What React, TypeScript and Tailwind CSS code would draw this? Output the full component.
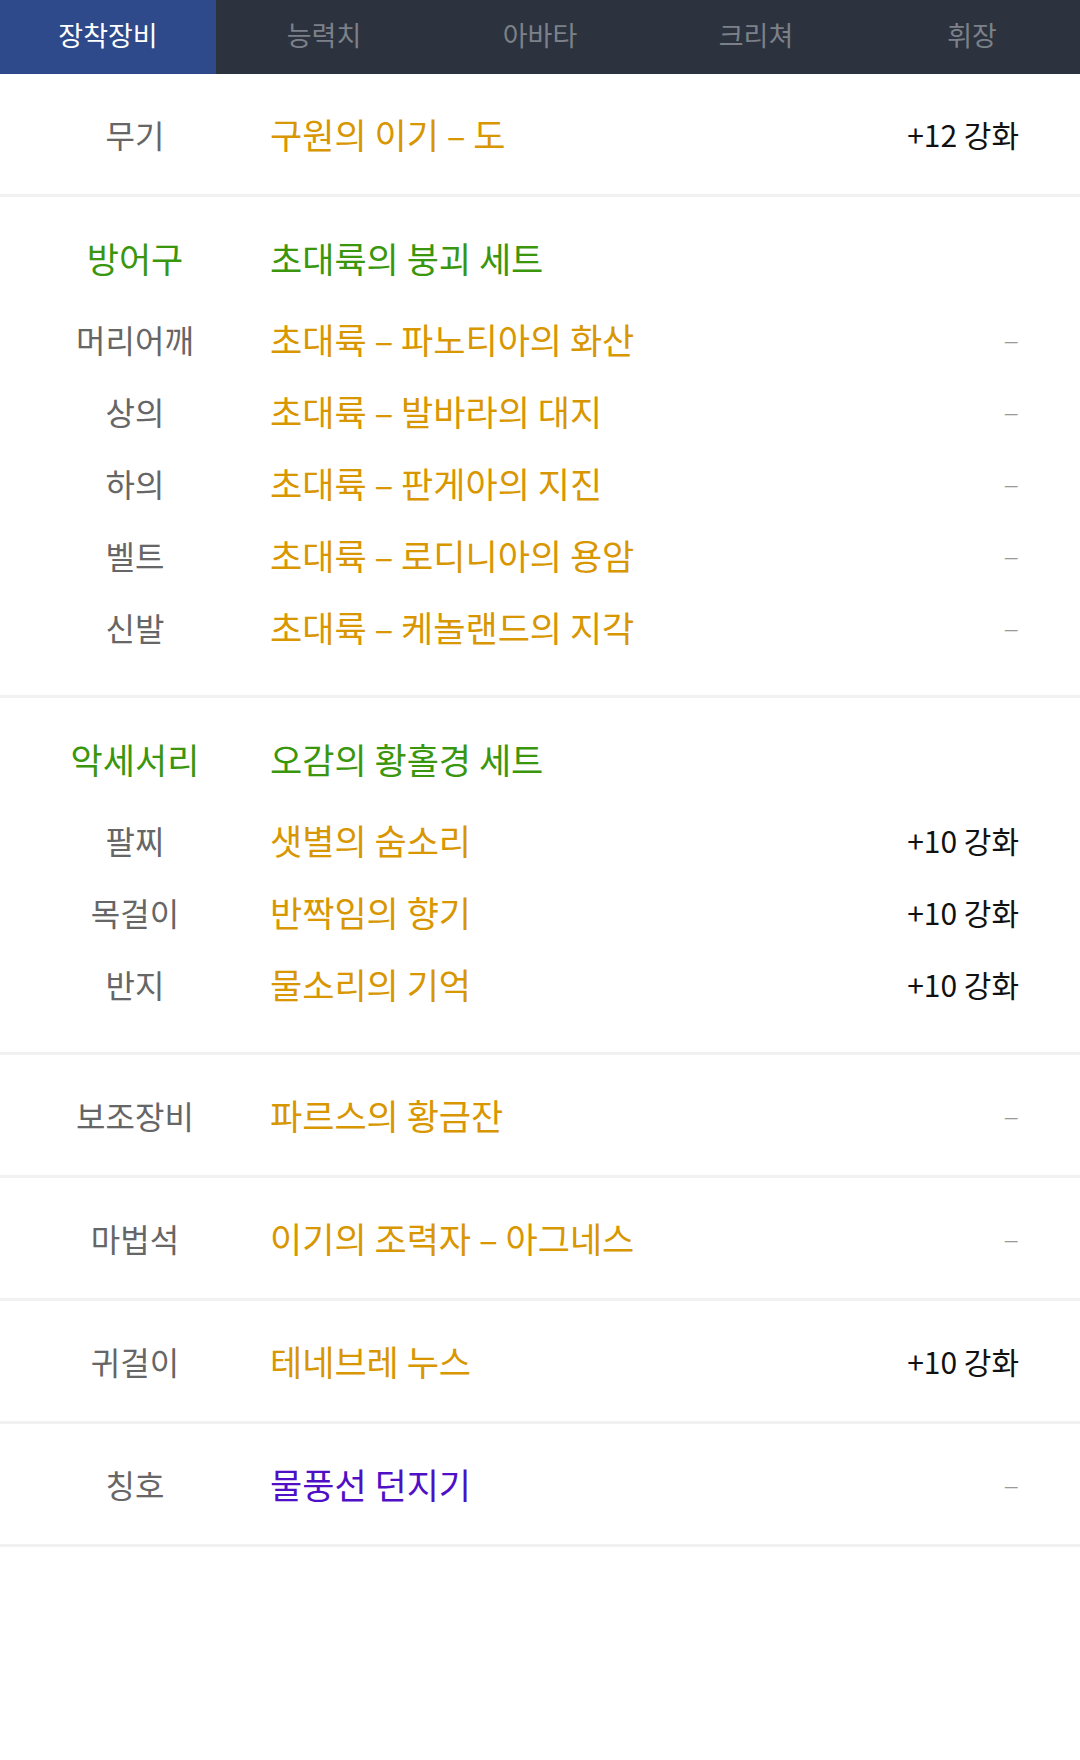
import React from "react";

const FONT = { fontFamily: '"Noto Sans CJK KR", "Noto Sans", sans-serif' };

type Row = { label: string; name: string; value?: string; color?: "orange" | "purple" };

const tabs = ["장착장비", "능력치", "아바타", "크리쳐", "휘장"];

function Value({ value }: { value?: string }) {
  if (value) {
    return <span className="text-[30px] text-[#111111]">{value}</span>;
  }
  return <span className="text-[29px] text-[#9a9a9a] font-light">–</span>;
}

function ItemRow({ row, h }: { row: Row; h: string }) {
  const nameColor = row.color === "purple" ? "text-[#4f0fc6]" : "text-[#d89600]";
  return (
    <div className={`flex items-center ${h}`}>
      <div className="w-[270px] shrink-0 text-center text-[32px] text-[#666666]">{row.label}</div>
      <div className={`flex-1 text-[35px] ${nameColor}`}>{row.name}</div>
      <div className="pr-[61px]">
        <Value value={row.value} />
      </div>
    </div>
  );
}

function Single({ row }: { row: Row }) {
  return (
    <div className="border-b-[3px] border-[#f1f1f1]">
      <ItemRow row={row} h="h-[120px]" />
    </div>
  );
}

function SetSection({ label, setName, rows }: { label: string; setName: string; rows: Row[] }) {
  return (
    <div className="border-b-[3px] border-[#f1f1f1] pt-[25px] pb-[32px]">
      <div className="flex items-center h-[72px]">
        <div className="w-[270px] shrink-0 text-center text-[35px] text-[#3a960c]">{label}</div>
        <div className="flex-1 text-[35px] text-[#3a960c]">{setName}</div>
      </div>
      <div className="mt-[9px]">
        {rows.map((r) => (
          <ItemRow key={r.label} row={r} h="h-[72px]" />
        ))}
      </div>
    </div>
  );
}

export default function App() {
  return (
    <div className="w-[1080px] min-h-[1760px] bg-white" style={FONT}>
      <div className="flex h-[74px] bg-[#2c323e]">
        {tabs.map((t, i) => (
          <div
            key={t}
            className={
              i === 0
                ? "flex-1 flex items-center justify-center pb-[4px] bg-[#2e4a8b] text-white text-[27px]"
                : "flex-1 flex items-center justify-center pb-[4px] text-[#7c8189] text-[27px]"
            }
          >
            {t}
          </div>
        ))}
      </div>

      <Single row={{ label: "무기", name: "구원의 이기 – 도", value: "+12 강화" }} />

      <SetSection
        label="방어구"
        setName="초대륙의 붕괴 세트"
        rows={[
          { label: "머리어깨", name: "초대륙 – 파노티아의 화산" },
          { label: "상의", name: "초대륙 – 발바라의 대지" },
          { label: "하의", name: "초대륙 – 판게아의 지진" },
          { label: "벨트", name: "초대륙 – 로디니아의 용암" },
          { label: "신발", name: "초대륙 – 케놀랜드의 지각" },
        ]}
      />

      <SetSection
        label="악세서리"
        setName="오감의 황홀경 세트"
        rows={[
          { label: "팔찌", name: "샛별의 숨소리", value: "+10 강화" },
          { label: "목걸이", name: "반짝임의 향기", value: "+10 강화" },
          { label: "반지", name: "물소리의 기억", value: "+10 강화" },
        ]}
      />

      <Single row={{ label: "보조장비", name: "파르스의 황금잔" }} />
      <Single row={{ label: "마법석", name: "이기의 조력자 – 아그네스" }} />
      <Single row={{ label: "귀걸이", name: "테네브레 누스", value: "+10 강화" }} />
      <Single row={{ label: "칭호", name: "물풍선 던지기", color: "purple" }} />
    </div>
  );
}
